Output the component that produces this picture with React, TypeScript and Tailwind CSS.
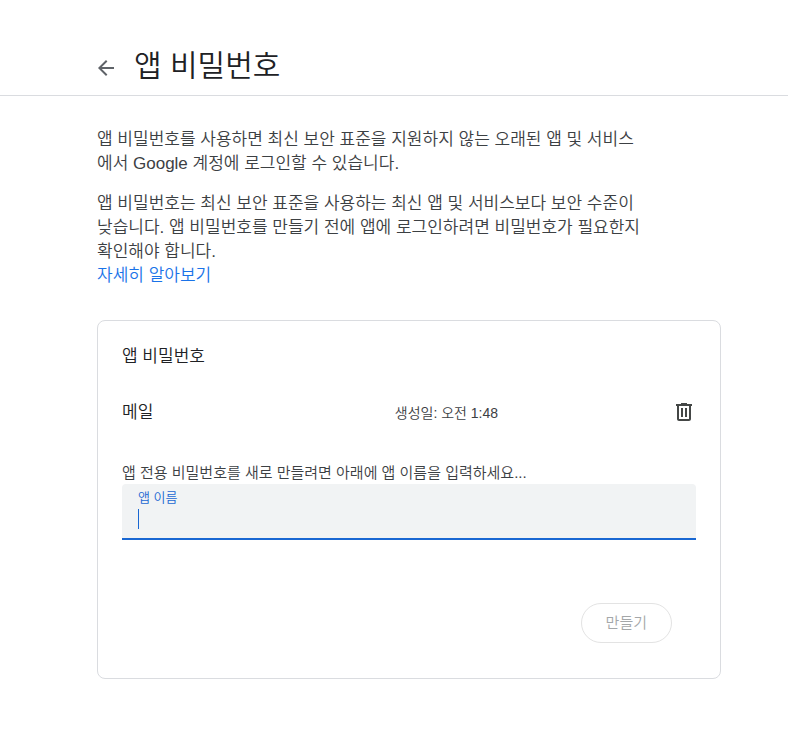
import { useState } from "react";

export default function App() {
  const [name, setName] = useState<string>("");

  return (
    <div className="min-h-screen bg-white pb-12 text-[#202124] font-['Liberation_Sans','Noto_Sans_CJK_KR',sans-serif] font-[350]">
      {/* Header */}
      <header className="flex h-24 items-end border-b border-[#dadce0] pb-[9px] pl-24">
        <div className="flex items-center gap-[18px]">
          <button aria-label="뒤로" className="pt-1 text-[#5f6368]">
            <svg width="20" height="20" viewBox="2 2 20 20" fill="currentColor">
              <path d="M20 11H7.83l5.59-5.59L12 4l-8 8 8 8 1.41-1.41L7.83 13H20v-2z" />
            </svg>
          </button>
          <h1 className="text-[30px] leading-10">앱 비밀번호</h1>
        </div>
      </header>

      <main className="pr-[67px] pl-[97px]">
        {/* Description */}
        <div className="max-w-[548px] pt-8 text-[17px] leading-6 text-[#3c4043]">
          <p>앱 비밀번호를 사용하면 최신 보안 표준을 지원하지 않는 오래된 앱 및 서비스에서 Google 계정에 로그인할 수 있습니다.</p>
          <p className="mt-4">앱 비밀번호는 최신 보안 표준을 사용하는 최신 앱 및 서비스보다 보안 수준이 낮습니다. 앱 비밀번호를 만들기 전에 앱에 로그인하려면 비밀번호가 필요한지 확인해야 합니다.</p>
          <a href="#learn-more" className="text-[#1a73e8]">자세히 알아보기</a>
        </div>

        {/* Card */}
        <section className="mt-8 rounded-lg border border-[#dadce0] px-6 pt-6 pb-[35px]">
          <h2 className="text-[17px] leading-6">앱 비밀번호</h2>
          <div className="mt-8 flex items-center">
            <span className="w-[47%] text-[17px] leading-6">메일</span>
            <span className="flex-1 pl-[3px] text-sm leading-6 text-[#3c4043]">생성일: 오전 1:48</span>
            <button aria-label="삭제" className="text-[#444746]">
              <svg width="24" height="24" viewBox="0 0 24 24" fill="currentColor">
                <path d="M15 3V2H9v1H4v2h1v13c0 1.1.9 2 2 2h10c1.1 0 2-.9 2-2V5h1V3h-5zm2 15H7V5h10v13zM9 7h2v9H9zm4 0h2v9h-2z" />
              </svg>
            </button>
          </div>
          <p className="mt-9 text-[15px] leading-[23px] text-[#3c4043]">앱 전용 비밀번호를 새로 만들려면 아래에 앱 이름을 입력하세요...</p>
          <div className="flex h-14 flex-col rounded-t border-b-2 border-[#1967d2] bg-[#f1f3f4] px-4 pt-1.5">
            <label htmlFor="app-name" className="text-[13px] leading-4 text-[#1967d2]">앱 이름</label>
            <div className="mt-[3px] flex h-5">
              <span className="w-px bg-[#1967d2]" />
              <input
                id="app-name"
                className="flex-1 caret-transparent outline-none"
                value={name}
                onChange={(e) => setName(e.target.value)}
              />
            </div>
          </div>
          <div className="mt-[63px] flex justify-end pr-6">
            <button disabled className="h-10 rounded-full border border-[#e3e3e3] px-6 text-[15px] text-[#a4a7a9]">만들기</button>
          </div>
        </section>
      </main>
    </div>
  );
}
